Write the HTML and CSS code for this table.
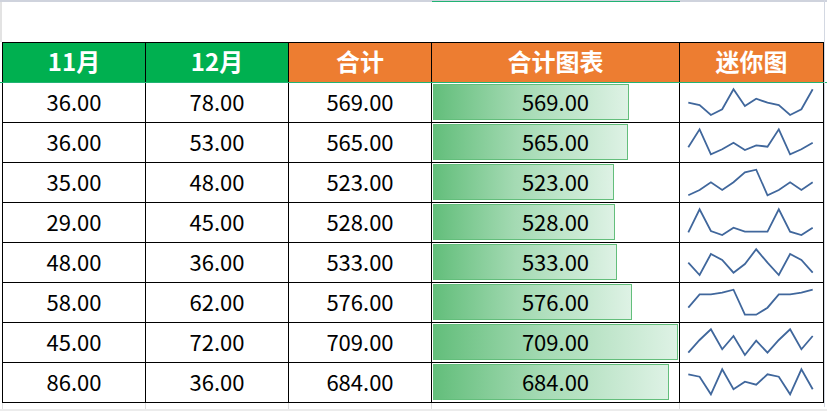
FILE: index.html
```html
<!DOCTYPE html>
<html lang="zh-CN">
<head>
<meta charset="utf-8">
<title>合计图表</title>
<link rel="stylesheet" href="styles.css">
</head>
<body>
<div class="sheet">
  <div class="colbar"><span class="colsel"></span></div>
  <div class="topzone"></div>
  <div class="grid">
    <div class="hd green">11月</div>
    <div class="hd green">12月</div>
    <div class="hd orange">合计</div>
    <div class="hd orange">合计图表</div>
    <div class="hd orange">迷你图</div>

    <div class="c">36.00</div><div class="c">78.00</div><div class="c">569.00</div>
    <div class="c barcell"><span class="bar" style="width:196px"></span><span class="bv">569.00</span></div>
    <div class="c spark"><svg viewBox="0 1 143 39" width="143" height="39"><polyline points="8.3,20.7 19.6,23 30.9,33 42.2,27.3 53.5,7.3 64.9,24 76.2,16.7 87.5,20.7 98.8,23 110.1,33 121.4,27.3 132.7,7.3"/></svg></div>

    <div class="c">36.00</div><div class="c">53.00</div><div class="c">565.00</div>
    <div class="c barcell"><span class="bar" style="width:195px"></span><span class="bv">565.00</span></div>
    <div class="c spark"><svg viewBox="0 1 143 39" width="143" height="39"><polyline points="8.3,25.3 19.6,7.3 30.9,32.3 42.2,27.3 53.5,20.7 64.9,28 76.2,23.3 87.5,24.7 98.8,7.3 110.1,32.3 121.4,27.3 132.7,20.7"/></svg></div>

    <div class="c">35.00</div><div class="c">48.00</div><div class="c">523.00</div>
    <div class="c barcell"><span class="bar" style="width:181px"></span><span class="bv">523.00</span></div>
    <div class="c spark"><svg viewBox="0 1 143 39" width="143" height="39"><polyline points="8.3,33.3 19.6,28 30.9,20.3 42.2,28 53.5,20.3 64.9,10.3 76.2,7.7 87.5,33.3 98.8,28 110.1,20.3 121.4,28 132.7,20.3"/></svg></div>

    <div class="c">29.00</div><div class="c">45.00</div><div class="c">528.00</div>
    <div class="c barcell"><span class="bar" style="width:182px"></span><span class="bv">528.00</span></div>
    <div class="c spark"><svg viewBox="0 1 143 39" width="143" height="39"><polyline points="8.3,30.3 19.6,7.3 30.9,29 42.2,33 53.5,25.7 64.9,29.7 76.2,29.7 87.5,29.7 98.8,7.3 110.1,29.7 121.4,33 132.7,25.7"/></svg></div>

    <div class="c">48.00</div><div class="c">36.00</div><div class="c">533.00</div>
    <div class="c barcell"><span class="bar" style="width:184px"></span><span class="bv">533.00</span></div>
    <div class="c spark"><svg viewBox="0 1 143 39" width="143" height="39"><polyline points="8.3,20.7 19.6,33 30.9,12 42.2,18 53.5,30.7 64.9,22 76.2,7.3 87.5,20.7 98.8,33 110.1,12 121.4,18 132.7,30.7"/></svg></div>

    <div class="c">58.00</div><div class="c">62.00</div><div class="c">576.00</div>
    <div class="c barcell"><span class="bar" style="width:199px"></span><span class="bv">576.00</span></div>
    <div class="c spark"><svg viewBox="0 1 143 39" width="143" height="39"><polyline points="8.3,25.7 19.6,12.3 30.9,12.3 42.2,10.7 53.5,7.7 64.9,32.7 76.2,32.7 87.5,25.7 98.8,12.3 110.1,12.3 121.4,10.7 132.7,7.7"/></svg></div>

    <div class="c">45.00</div><div class="c">72.00</div><div class="c">709.00</div>
    <div class="c barcell"><span class="bar" style="width:245px"></span><span class="bv">709.00</span></div>
    <div class="c spark"><svg viewBox="0 1 143 39" width="143" height="39"><polyline points="8.3,30.7 19.6,18 30.9,7.3 42.2,27.3 53.5,14 64.9,33 76.2,18.7 87.5,30.7 98.8,18 110.1,7.3 121.4,27.3 132.7,14"/></svg></div>

    <div class="c">86.00</div><div class="c">36.00</div><div class="c">684.00</div>
    <div class="c barcell"><span class="bar" style="width:236px"></span><span class="bv">684.00</span></div>
    <div class="c spark"><svg viewBox="0 1 143 39" width="143" height="39"><polyline points="8.3,12.3 19.6,14.7 30.9,32.3 42.2,7.3 53.5,27.3 64.9,19.7 76.2,22.7 87.5,12.3 98.8,14.7 110.1,32.3 121.4,7.3 132.7,27.3"/></svg></div>
  </div>
  <div class="below">
    <span></span><span></span><span></span><span></span><span></span>
  </div>
  <div class="band"></div>
  <div class="freeze"></div>
  <div class="rgrid"></div>
</div>
</body>
</html>
```

FILE: styles.css
```css
* { box-sizing: border-box; }
html, body { margin: 0; padding: 0; background: #ffffff; }
body {
  font-family: "Noto Sans CJK SC", "Noto Sans", sans-serif;
  color: #000;
  overflow: hidden;
}
.sheet {
  position: relative;
  width: 827px;
  height: 411px;
  overflow: hidden;
  background: #fff;
}
.colbar {
  height: 2px;
  background: #cfd3dd;
  position: relative;
}
.colsel {
  position: absolute;
  left: 432px;
  width: 248px;
  top: 1px;
  height: 1px;
  background: #21b373;
}
.topzone {
  height: 40px;
  border-left: 2px solid #e3e3e3;
}
.grid {
  margin-left: 2px;
  width: 822px;
  display: grid;
  grid-template-columns: 142px 142px 142px 247px 143px;
  grid-auto-rows: 39px;
  gap: 1px;
  padding: 1px;
  background: #000;
}
.hd {
  display: flex;
  align-items: center;
  justify-content: center;
  color: #fff;
  font-weight: 700;
  font-size: 24px;
  line-height: 1;
  padding-bottom: 3px;
}
.green { background: #00b050; }
.orange { background: #ed7d31; }
.c {
  background: #fff;
  display: flex;
  align-items: center;
  justify-content: center;
  font-size: 22px;
  font-weight: 400;
  line-height: 1;
  padding-bottom: 3px;
}
.barcell {
  display: grid;
  justify-content: stretch;
  align-items: stretch;
  padding: 0;
}
.bar {
  grid-area: 1 / 1;
  margin: 1px 0 2px 1px;
  border: 1px solid #63be7b;
  background: linear-gradient(to right, #63be7b 0%, #a4dab3 45%, #def2e5 100%);
}
.bv {
  grid-area: 1 / 1;
  align-self: center;
  justify-self: center;
  padding-bottom: 3px;
}
.spark { padding: 0; }
.spark svg { display: block; }
.spark polyline {
  fill: none;
  stroke: #40679c;
  stroke-width: 1.8;
  stroke-linejoin: miter;
}
.below {
  margin-left: 2px;
  height: 6px;
  display: grid;
  grid-template-columns: 143px 143px 143px 248px 144px;
}
.below span { border-left: 1px solid #dcdcdc; }
.band {
  height: 4px;
  background: #ececec;
}
.freeze {
  position: absolute;
  left: 0;
  right: 0;
  top: 82px;
  height: 1px;
  background: #21b373;
}
.rgrid {
  position: absolute;
  left: 824px;
  top: 0;
  width: 1px;
  height: 407px;
  background: #d3d8e2;
}
```
